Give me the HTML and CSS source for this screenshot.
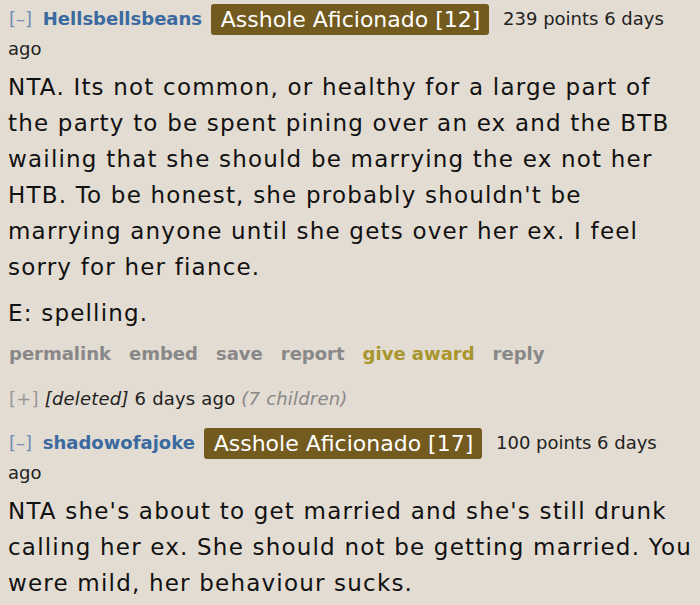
FILE: index.html
```html
<!DOCTYPE html>
<html>
<head>
<meta charset="utf-8">
<link rel="stylesheet" href="styles.css">
</head>
<body>
<div class="comment">
  <div class="tagline">
    <span class="expand">[–]</span> <span class="author">Hellsbellsbeans</span> <span class="flair">Asshole Aficionado [12]</span> 239 points 6 days ago
  </div>
  <div class="md">
    <p>NTA. Its not common, or healthy for a large part of the party to be spent pining over an ex and the BTB wailing that she should be marrying the ex not her HTB. To be honest, she probably shouldn't be marrying anyone until she gets over her ex. I feel sorry for her fiance.</p>
    <p>E: spelling.</p>
  </div>
  <ul class="buttons">
    <li>permalink</li>
    <li>embed</li>
    <li>save</li>
    <li>report</li>
    <li class="award">give award</li>
    <li>reply</li>
  </ul>
</div>
<div class="collapsed">
  <span class="expand">[+]</span> <span class="deleted">[deleted]</span> 6 days ago <span class="children">(7 children)</span>
</div>
<div class="comment">
  <div class="tagline">
    <span class="expand">[–]</span> <span class="author">shadowofajoke</span> <span class="flair">Asshole Aficionado [17]</span> 100 points 6 days ago
  </div>
  <div class="md">
    <p>NTA she's about to get married and she's still drunk calling her ex. She should not be getting married. You were mild, her behaviour sucks.</p>
  </div>
</div>
</body>
</html>
```

FILE: styles.css
```css
html, body {
  margin: 0;
  padding: 0;
  background: #e3dcd2;
}
body {
  padding: 0 3px 0 8px;
  font-family: "DejaVu Sans", Verdana, sans-serif;
  color: #111;
  overflow: hidden;
}
.tagline {
  font-size: 18px;
  line-height: 28px;
  color: #222;
  padding: 4px 11px 0 0;
}
.expand {
  color: #6f8fb5;
  margin-left: 1px;
}
.author {
  color: #3a6aa0;
  font-weight: bold;
  margin-left: 5px;
}
.flair {
  display: inline-block;
  background: #735a1e;
  color: #fff;
  font-size: 22px;
  line-height: 31px;
  padding: 0 9px 0 10px;
  border-radius: 3px;
  margin: 0 8px 0 3px;
  vertical-align: middle;
}
.md {
  font-size: 23px;
  letter-spacing: 1.2px;
  line-height: 36px;
}
.md p {
  margin: 6px 0 0;
}
.md p + p {
  margin-top: 10px;
}
.buttons {
  list-style: none;
  margin: 10px 0 0 1px;
  padding: 0;
  display: flex;
  gap: 18px;
  font-size: 18px;
  font-weight: bold;
  color: #888;
  line-height: 26px;
}
.buttons .award {
  color: #a8952c;
}
.collapsed {
  font-size: 18px;
  letter-spacing: 0.2px;
  line-height: 26px;
  margin-top: 19px;
  margin-bottom: 12px;
  color: #222;
}
.collapsed .expand {
  color: #999;
}
.deleted {
  font-style: italic;
}
.children {
  font-style: italic;
  color: #888;
}
```
